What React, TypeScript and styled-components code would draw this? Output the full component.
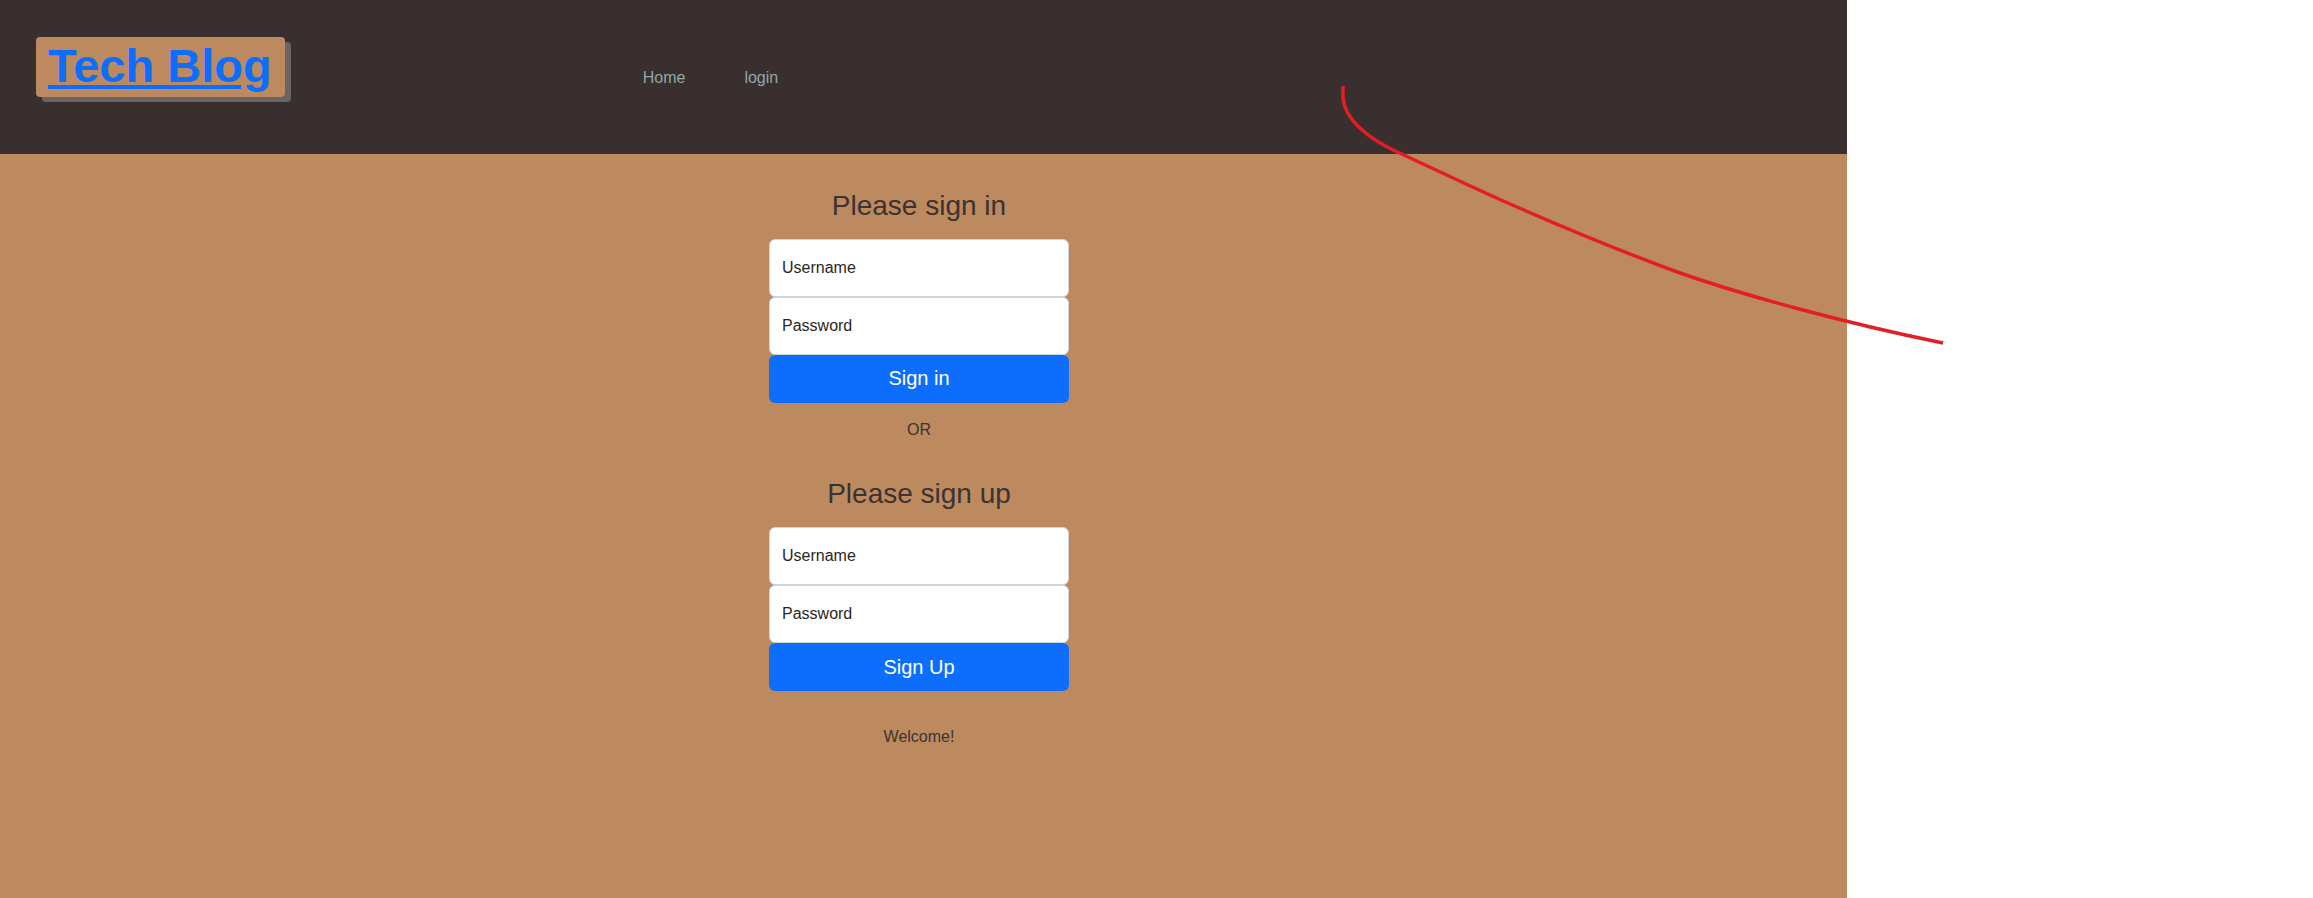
import styled, { createGlobalStyle } from 'styled-components';

const GlobalStyle = createGlobalStyle`
  html, body {
    margin: 0;
    padding: 0;
    background: #ffffff;
  }
  body {
    font-family: 'Liberation Sans', Arial, sans-serif;
    font-size: 16px;
    line-height: 1.5;
    color: #3a3332;
  }
`;

const Page = styled.div`
  position: relative;
  width: 1847px;
  min-height: 898px;
  display: flex;
  flex-direction: column;
  background: #bd8a60;
`;

const Header = styled.header`
  height: 154px;
  display: flex;
  align-items: flex-start;
  padding: 37px 0 0 36px;
  box-sizing: border-box;
  background: #382f2e;
`;

const Logo = styled.a`
  display: block;
  padding: 0 13px 2px 12px;
  line-height: 58px;
  font-size: 47px;
  font-weight: 700;
  color: #0d6efd;
  text-decoration: underline;
  background: #bd8a60;
  border-radius: 4px;
  box-shadow: 6px 5px 0 #6c6463;
  cursor: pointer;
`;

const Nav = styled.nav`
  display: flex;
  gap: 59px;
  margin: 29px 0 0 358px;
`;

const NavLink = styled.a`
  font-size: 16px;
  line-height: 24px;
  color: #91a8a8;
  text-decoration: none;
  cursor: pointer;
`;

const Main = styled.main`
  flex: 1;
  display: flex;
  flex-direction: column;
  align-items: center;
  padding: 35px 9px 0 0;
`;

const Form = styled.form`
  width: 300px;
  display: flex;
  flex-direction: column;
`;

const Title = styled.h3<{ $gap: number }>`
  margin: 0 0 ${(p) => p.$gap}px;
  font-size: 28px;
  line-height: 1.2;
  font-weight: 400;
  text-align: center;
  color: #3a3332;
`;

const Input = styled.input`
  height: 58px;
  box-sizing: border-box;
  padding: 0 12px;
  border: 1px solid #ced4da;
  border-radius: 6px;
  background: #ffffff;
  font-family: inherit;
  font-size: 16px;
  color: #2a2626;
  outline: none;
  &::placeholder {
    color: #2a2626;
    opacity: 1;
  }
`;

const Button = styled.button`
  height: 48px;
  border: none;
  border-radius: 6px;
  background: #0d6efd;
  color: #ffffff;
  font-family: inherit;
  font-size: 20px;
  cursor: pointer;
`;

const Note = styled.p<{ $top: number }>`
  margin: ${(p) => p.$top}px 0 0;
  font-size: 16px;
  line-height: 24px;
  text-align: center;
  color: #3a3332;
`;

const Spacer = styled.div`
  height: 35px;
`;

const Scribble = styled.svg`
  position: absolute;
  top: 0;
  left: 0;
  width: 2313px;
  height: 898px;
  pointer-events: none;
`;

const curve =
  'M1343,86 L1343,97 C1344,118 1366,139 1406,156 C1438,171 1470,186 1501,200 ' +
  'C1560,226 1620,251 1680,273 C1740,294 1840,322 1943,343';

function AuthForm({ title, gap, button }: { title: string; gap: number; button: string }) {
  return (
    <Form onSubmit={(e) => e.preventDefault()}>
      <Title $gap={gap}>{title}</Title>
      <Input type='text' placeholder='Username' />
      <Input type='password' placeholder='Password' />
      <Button type='submit'>{button}</Button>
    </Form>
  );
}

export default function App() {
  return (
    <>
      <GlobalStyle />
      <Page>
        <Header>
          <Logo>Tech Blog</Logo>
          <Nav>
            <NavLink>Home</NavLink>
            <NavLink>login</NavLink>
          </Nav>
        </Header>
        <Main>
          <AuthForm title='Please sign in' gap={16} button='Sign in' />
          <Note $top={15}>OR</Note>
          <Spacer />
          <AuthForm title='Please sign up' gap={17} button='Sign Up' />
          <Note $top={34}>Welcome!</Note>
        </Main>
      </Page>
      <Scribble viewBox='0 0 2313 898'>
        <path d={curve} fill='none' stroke='#e31e24' strokeWidth={3.5} strokeLinecap='butt' />
      </Scribble>
    </>
  );
}
